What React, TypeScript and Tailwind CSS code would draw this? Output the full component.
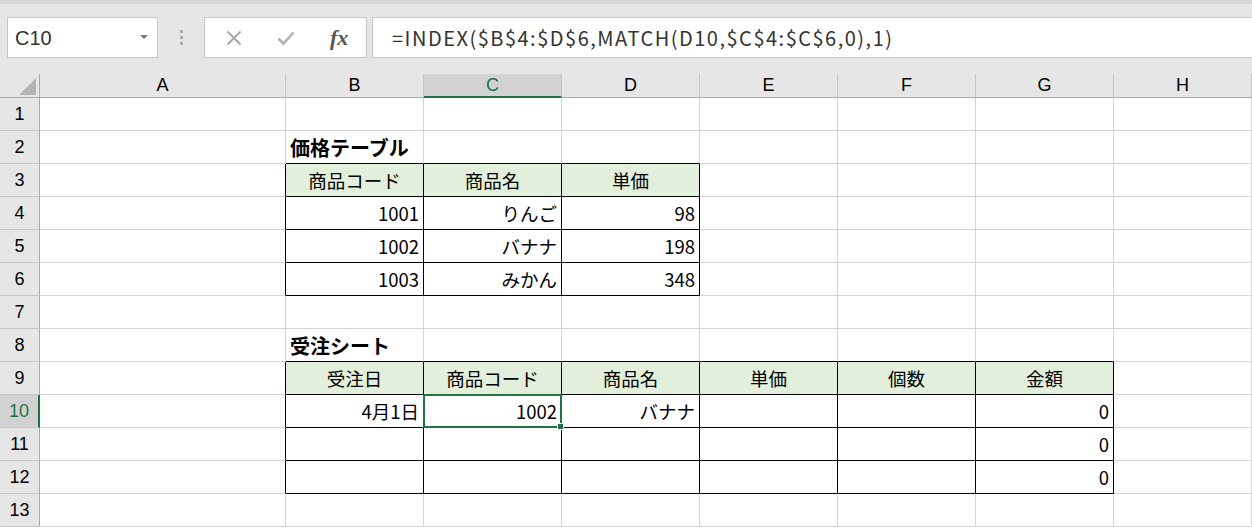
import React from 'react'

type Cell = { text: string; align?: 'left' | 'center' | 'right'; bold?: boolean; head?: boolean }

const colLetters = ['A', 'B', 'C', 'D', 'E', 'F', 'G', 'H']

const data: Record<number, Record<number, Cell>> = {
    2: { 1: { text: '価格テーブル', align: 'left', bold: true } },
    3: {
        1: { text: '商品コード', align: 'center', head: true },
        2: { text: '商品名', align: 'center', head: true },
        3: { text: '単価', align: 'center', head: true },
    },
    4: { 1: { text: '1001' }, 2: { text: 'りんご' }, 3: { text: '98' } },
    5: { 1: { text: '1002' }, 2: { text: 'バナナ' }, 3: { text: '198' } },
    6: { 1: { text: '1003' }, 2: { text: 'みかん' }, 3: { text: '348' } },
    8: { 1: { text: '受注シート', align: 'left', bold: true } },
    9: {
        1: { text: '受注日', align: 'center', head: true },
        2: { text: '商品コード', align: 'center', head: true },
        3: { text: '商品名', align: 'center', head: true },
        4: { text: '単価', align: 'center', head: true },
        5: { text: '個数', align: 'center', head: true },
        6: { text: '金額', align: 'center', head: true },
    },
    10: { 1: { text: '4月1日' }, 2: { text: '1002' }, 3: { text: 'バナナ' }, 6: { text: '0' } },
    11: { 6: { text: '0' } },
    12: { 6: { text: '0' } },
}

const inTable = (r: number, c: number) =>
    (r >= 3 && r <= 6 && c >= 1 && c <= 3) || (r >= 9 && r <= 12 && c >= 1 && c <= 6)

const rows = Array.from({ length: 13 }, (_, i) => i + 1)

function GridCell({ r, c }: { r: number; c: number }) {
    const cell = data[r]?.[c]
    const rightBlack = inTable(r, c) || inTable(r, c + 1)
    const bottomBlack = inTable(r, c) || inTable(r + 1, c)
    const selected = r === 10 && c === 2
    const align = cell?.align ?? 'right'

    return (
        <div
            className={`relative h-[33px] flex items-center pt-[2px] px-[4px] border-r border-b whitespace-nowrap text-[18.5px] text-black ${
                rightBlack ? 'border-r-black' : 'border-r-[#d4d4d4]'
            } ${bottomBlack ? 'border-b-black' : 'border-b-[#d4d4d4]'} ${
                cell?.head ? 'bg-[#e2efda]' : 'bg-white'
            } ${align === 'right' ? 'justify-end' : align === 'center' ? 'justify-center' : 'justify-start'} ${
                selected ? 'z-10' : ''
            } ${cell?.bold ? 'font-bold text-[20px] z-[5]' : ''} ${cell?.bold || selected ? 'overflow-visible' : 'overflow-hidden'}`}
        >
            {cell?.text}
            {selected && (
                <div className="absolute -left-[1px] -top-[1px] -right-[1px] -bottom-[1px] border-2 border-[#217346]">
                    <div className="absolute -right-[4px] -bottom-[4px] w-[7px] h-[7px] bg-[#217346] border border-white" />
                </div>
            )}
        </div>
    )
}

export default function App() {
    return (
        <div className="w-[1252px] h-[528px] overflow-hidden bg-white font-['Noto_Sans_CJK_JP',sans-serif]">
            {/* Toolbar / formula bar */}
            <div className="h-[4px] bg-[#d5d5d5]" />
            <div className="h-[70px] bg-[#e6e6e6] pt-[13px] flex items-start">
                <div className="ml-[7px] w-[151px] h-[41px] bg-white border border-[#c6c6c6] flex items-center justify-between pl-[7px] pr-[9px]">
                    <span className="text-[20px] text-[#333] font-['Liberation_Sans',sans-serif]">C10</span>
                    <svg width="8" height="5" viewBox="0 0 8 5">
                        <path d="M0 0 L8 0 L4 4 Z" fill="#777" />
                    </svg>
                </div>
                <div className="w-[46px] h-[41px] flex flex-col items-center justify-center gap-[3px]">
                    <div className="w-[3px] h-[3px] bg-[#aaa]" />
                    <div className="w-[3px] h-[3px] bg-[#aaa]" />
                    <div className="w-[3px] h-[3px] bg-[#aaa]" />
                </div>
                <div className="w-[163px] h-[41px] bg-white border border-[#c6c6c6] flex items-center">
                    <div className="w-[56px] flex justify-center pl-[2px]">
                        <svg width="16" height="16" viewBox="0 0 16 16">
                            <path d="M1.5 1.5 L14.5 14.5 M14.5 1.5 L1.5 14.5" stroke="#a8a8a8" strokeWidth="2" fill="none" />
                        </svg>
                    </div>
                    <div className="w-[52px] flex justify-center">
                        <svg width="18" height="16" viewBox="0 0 18 16">
                            <path d="M1.5 8.5 L6.5 13.5 L16.5 2.5" stroke="#b2b2b2" strokeWidth="2.6" fill="none" />
                        </svg>
                    </div>
                    <div className="w-[54px] flex justify-center">
                        <span className="font-['Liberation_Serif',serif] italic font-bold text-[22px] text-[#555] leading-none">fx</span>
                    </div>
                </div>
                <div className="ml-[5px] flex-1 h-[41px] bg-white border border-[#c6c6c6] border-r-0 flex items-center pl-[19px]">
                    <span className="text-[20px] text-[#333] tracking-[1.5px]">
                        =INDEX($B$4:$D$6,MATCH(D10,$C$4:$C$6,0),1)
                    </span>
                </div>
            </div>

            {/* Sheet grid */}
            <div className="grid grid-cols-[40px_246px_138px_138px_138px_138px_138px_138px_138px]">
                {/* corner */}
                <div className="h-[24px] bg-[#e6e6e6] border-r border-b border-[#ababab] relative">
                    <svg className="absolute right-[3px] bottom-[2px]" width="17" height="17" viewBox="0 0 17 17">
                        <path d="M17 0 L17 17 L0 17 Z" fill="#b4b4b4" />
                    </svg>
                </div>
                {colLetters.map((l, i) => (
                    <div
                        key={l}
                        className={`h-[24px] flex items-center justify-center font-['Liberation_Sans',sans-serif] text-[18px] border-r border-r-[#c6c6c6] ${
                            i === 2
                                ? 'bg-[#d2d2d2] text-[#217346] border-b-2 border-b-[#217346]'
                                : 'bg-[#e6e6e6] text-black border-b border-b-[#ababab]'
                        }`}
                    >
                        {l}
                    </div>
                ))}

                {rows.map((r) => (
                    <React.Fragment key={r}>
                        <div
                            className={`h-[33px] flex items-center justify-center font-['Liberation_Sans',sans-serif] text-[18px] border-b border-b-[#c6c6c6] ${
                                r === 10
                                    ? 'bg-[#d2d2d2] text-[#217346] border-r-2 border-r-[#217346]'
                                    : 'bg-[#e6e6e6] text-black border-r border-r-[#ababab]'
                            }`}
                        >
                            {r}
                        </div>
                        {colLetters.map((_, c) => (
                            <GridCell key={c} r={r} c={c} />
                        ))}
                    </React.Fragment>
                ))}
            </div>
        </div>
    )
}
